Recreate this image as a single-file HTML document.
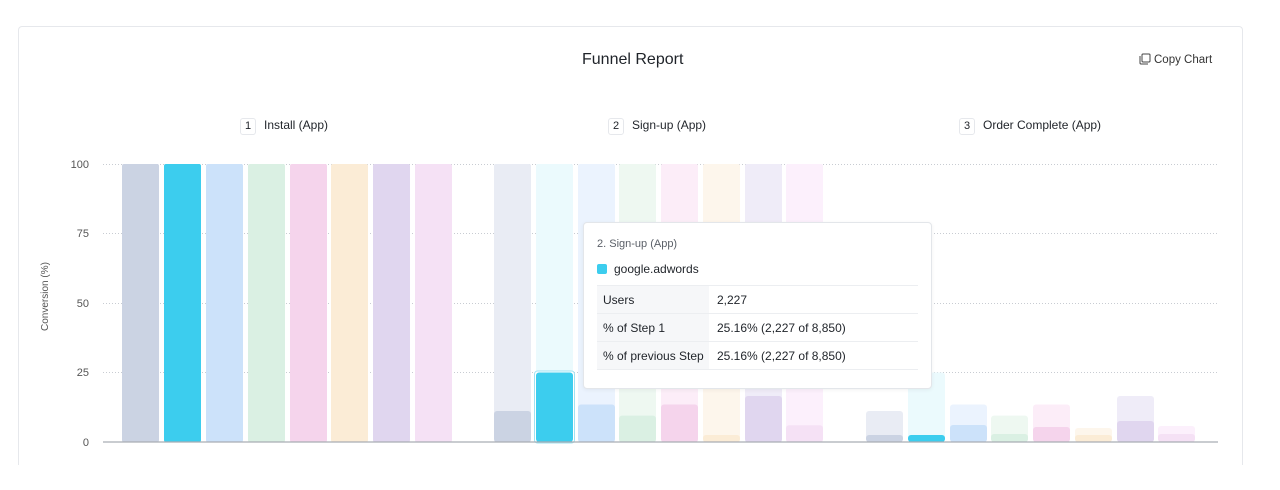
<!DOCTYPE html>
<html><head><meta charset="utf-8"><style>
body{margin:0;width:1280px;height:490px;background:#fff;font-family:"Liberation Sans",sans-serif;position:relative;overflow:hidden}
.card{position:absolute;left:18px;top:26px;width:1223px;height:438px;border:1px solid #e6e8ec;border-bottom:none;border-radius:4px 4px 0 0}
.t{position:absolute;color:#1f2329;white-space:nowrap}
.step{position:absolute;top:118px;font-size:12px;color:#1f2329;white-space:nowrap}
.step b{display:inline-block;font-weight:normal;border:1px solid #e6e8ec;border-radius:3px;width:14px;height:15px;line-height:15px;text-align:center;margin-right:8px;font-size:11px}
.tip{position:absolute;left:583px;top:222px;width:347px;height:165px;background:#fff;border:1px solid #e3e6ea;border-radius:4px;box-shadow:0 1px 4px rgba(0,0,0,.06)}
table{position:absolute;left:13px;top:62px;width:321px;border-collapse:collapse;font-size:12px;color:#1f2329}
td{height:27px;border-top:1px solid #eceef1;border-bottom:1px solid #eceef1;padding:0 0 0 6px}
td.k{background:#f6f7f9;width:106px}
td.v{padding-left:8px}
</style></head><body>
<div class="card"></div>
<div class="t" style="left:582px;top:51px;font-size:16px">Funnel Report</div>
<div class="t" style="left:1139px;top:53px;font-size:11.5px;color:#333">
<svg width="12" height="12" viewBox="0 0 12 12" style="vertical-align:-2px;margin-right:3px"><rect x="3" y="1" width="8" height="8" rx="1" fill="none" stroke="#444" stroke-width="1"/><path d="M1 3v7a1 1 0 0 0 1 1h7" fill="none" stroke="#444" stroke-width="1"/></svg>Copy Chart</div>
<div class="step" style="left:240px"><b>1</b>Install (App)</div>
<div class="step" style="left:608px"><b>2</b>Sign-up (App)</div>
<div class="step" style="left:959px"><b>3</b>Order Complete (App)</div>
<div class="t" style="left:40px;top:331px;font-size:10px;color:#555;transform:rotate(-90deg);transform-origin:0 0">Conversion (%)</div>
<svg width="1280" height="490" style="position:absolute;left:0;top:0" font-family="Liberation Sans" font-size="11" fill="#555">
<text x="89" y="168" text-anchor="end">100</text>
<text x="89" y="237" text-anchor="end">75</text>
<text x="89" y="307" text-anchor="end">50</text>
<text x="89" y="376" text-anchor="end">25</text>
<text x="89" y="446" text-anchor="end">0</text>
<g stroke="#c8ccd2" stroke-dasharray="1 2" stroke-width="1">
<line x1="103" x2="1218" y1="164.5" y2="164.5"/><line x1="103" x2="1218" y1="233.5" y2="233.5"/><line x1="103" x2="1218" y1="303.5" y2="303.5"/><line x1="103" x2="1218" y1="372.5" y2="372.5"/>
</g>
<g>
<rect x="122" y="164" width="37" height="278" rx="2" fill="#cbd3e3"/>
<rect x="164" y="164" width="37" height="278" rx="2" fill="#3ccdee"/>
<rect x="206" y="164" width="37" height="278" rx="2" fill="#cce2fa"/>
<rect x="248" y="164" width="37" height="278" rx="2" fill="#daf0e3"/>
<rect x="290" y="164" width="37" height="278" rx="2" fill="#f5d4ec"/>
<rect x="331" y="164" width="37" height="278" rx="2" fill="#fbecd6"/>
<rect x="373" y="164" width="37" height="278" rx="2" fill="#e0d6ef"/>
<rect x="415" y="164" width="37" height="278" rx="2" fill="#f5e1f5"/>
</g>
<g>
<rect x="494" y="164" width="37" height="278" rx="2" fill="#e9ecf4"/>
<rect x="536" y="164" width="37" height="278" rx="2" fill="#ebfafd"/>
<rect x="578" y="164" width="37" height="278" rx="2" fill="#ebf3fe"/>
<rect x="619" y="164" width="37" height="278" rx="2" fill="#eef8f1"/>
<rect x="661" y="164" width="37" height="278" rx="2" fill="#fcedf8"/>
<rect x="703" y="164" width="37" height="278" rx="2" fill="#fdf6ec"/>
<rect x="745" y="164" width="37" height="278" rx="2" fill="#efecf8"/>
<rect x="786" y="164" width="37" height="278" rx="2" fill="#fcf0fc"/>
</g>
<g>
<rect x="494" y="411" width="37" height="31" rx="3" fill="#cbd3e3"/>
<rect x="534.5" y="371" width="40" height="72" rx="3" fill="#fff" stroke="#9fe3f3"/>
<rect x="536" y="372.5" width="37" height="69.5" rx="3" fill="#3ccdee"/>
<rect x="578" y="404.5" width="37" height="37.5" rx="3" fill="#cce2fa"/>
<rect x="619" y="415.6" width="37" height="26.4" rx="3" fill="#daf0e3"/>
<rect x="661" y="404.5" width="37" height="37.5" rx="3" fill="#f5d4ec"/>
<rect x="703" y="435" width="37" height="7" rx="3" fill="#fbecd6"/>
<rect x="745" y="396" width="37" height="46" rx="3" fill="#e0d6ef"/>
<rect x="786" y="425.3" width="37" height="16.7" rx="3" fill="#f5e1f5"/>
</g>
<g>
<rect x="866" y="411" width="37" height="31" rx="3" fill="#e9ecf4"/>
<rect x="908" y="372.5" width="37" height="69.5" rx="3" fill="#ebfafd"/>
<rect x="950" y="404.5" width="37" height="37.5" rx="3" fill="#ebf3fe"/>
<rect x="991" y="415.6" width="37" height="26.4" rx="3" fill="#eef8f1"/>
<rect x="1033" y="404.5" width="37" height="37.5" rx="3" fill="#fcedf8"/>
<rect x="1075" y="428" width="37" height="14" rx="3" fill="#fdf6ec"/>
<rect x="1117" y="396" width="37" height="46" rx="3" fill="#efecf8"/>
<rect x="1158" y="426" width="37" height="16" rx="3" fill="#fcf0fc"/>
<rect x="866" y="435" width="37" height="7" rx="3" fill="#cbd3e3"/>
<rect x="908" y="435" width="37" height="7" rx="3" fill="#3ccdee"/>
<rect x="950" y="425" width="37" height="17" rx="3" fill="#cce2fa"/>
<rect x="991" y="434" width="37" height="8" rx="3" fill="#daf0e3"/>
<rect x="1033" y="427" width="37" height="15" rx="3" fill="#f5d4ec"/>
<rect x="1075" y="435" width="37" height="7" rx="3" fill="#fbecd6"/>
<rect x="1117" y="421" width="37" height="21" rx="3" fill="#e0d6ef"/>
<rect x="1158" y="434" width="37" height="8" rx="3" fill="#f5e1f5"/>
</g>
<line x1="103" x2="1218" y1="442" y2="442" stroke="#a9adb3" stroke-width="1.2"/>
</svg>
<div class="tip">
<div class="t" style="left:13px;top:15px;font-size:11px;color:#5b6068">2. Sign-up (App)</div>
<div style="position:absolute;left:13px;top:41px;width:10px;height:10px;border-radius:2px;background:#3ccdee"></div>
<div class="t" style="left:30px;top:39px;font-size:12px">google.adwords</div>
<table>
<tr><td class="k">Users</td><td class="v">2,227</td></tr>
<tr><td class="k">% of Step 1</td><td class="v">25.16% (2,227 of 8,850)</td></tr>
<tr><td class="k">% of previous Step</td><td class="v">25.16% (2,227 of 8,850)</td></tr>
</table>
</div>
</body></html>
